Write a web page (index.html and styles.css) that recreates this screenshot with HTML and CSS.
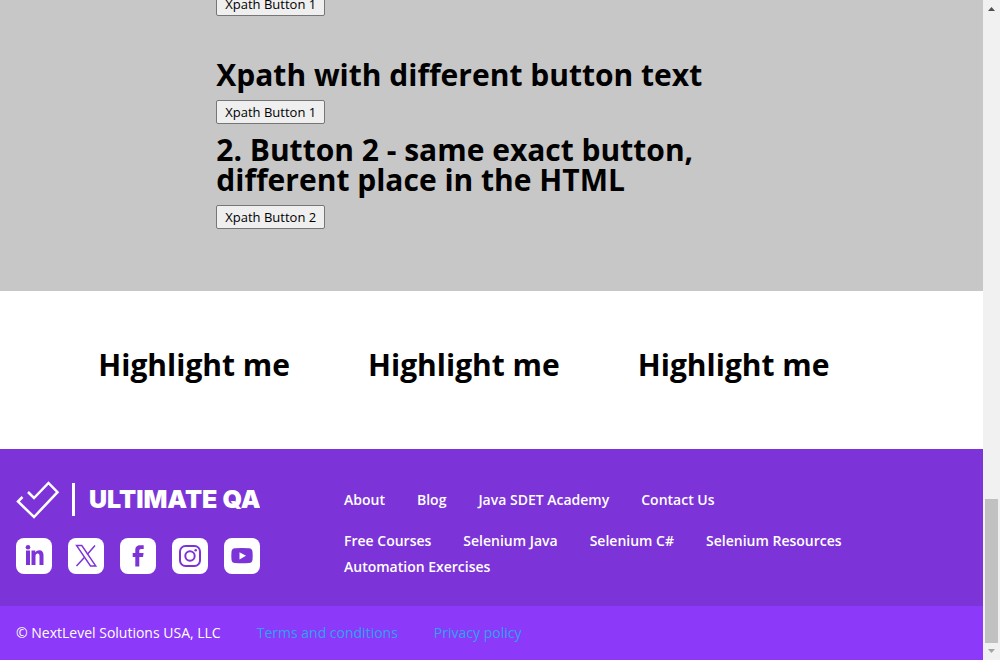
FILE: index.html
```html
<!DOCTYPE html>
<html lang="en">
<head>
<meta charset="utf-8">
<title>Ultimate QA</title>
<link rel="stylesheet" href="styles.css">
</head>
<body>
<div class="viewport">
  <div class="page">
    <main>
      <section class="xpaths">
        <div class="container">
          <div class="xpath-column">
            <button type="button" class="plain-button first-button">Xpath Button 1</button>
            <h2 class="heading">Xpath with different button text</h2>
            <button type="button" class="plain-button">Xpath Button 1</button>
            <h2 class="heading spaced">2. Button 2 - same exact button, different place in the HTML</h2>
            <button type="button" class="plain-button">Xpath Button 2</button>
          </div>
        </div>
      </section>
      <section class="highlights">
        <div class="container highlight-row">
          <h2 class="heading">Highlight me</h2>
          <h2 class="heading">Highlight me</h2>
          <h2 class="heading">Highlight me</h2>
        </div>
      </section>
    </main>
    <footer>
      <div class="footer-main">
        <div class="brand">
          <a class="logo" href="#" aria-label="Ultimate QA">
            <svg class="logo-mark" viewBox="0 0 60 38" width="60" height="38" aria-hidden="true">
              <path d="M6.500 16 2 20.500l16 15.500L41.500 11.200 32.500 2 18 17l-6-6" fill="none" stroke="#fff" stroke-width="2.500"/>
              <path d="M57.500 2v33" stroke="#fff" stroke-width="3"/>
            </svg>
            <svg class="logo-name" viewBox="0 0 172 38" width="172" height="38"><text x="1" y="27">ULTIMATE QA</text></svg>
          </a>
          <nav class="social" aria-label="Social media">
            <a href="#" aria-label="LinkedIn"><svg viewBox="0 0 36 36"><circle cx="12" cy="9.300" r="2.300"/><path d="M10 12.500h4v14.500h-4zM15.500 12.500h3.800v2c1-1.600 2.200-2.300 4-2.300 3 0 4.200 2 4.200 5.300v9.500h-4v-8.700c0-1.800-.5-2.800-1.800-2.800-1.500 0-2.200 1-2.200 2.900V27h-4z"/></svg></a>
            <a href="#" aria-label="X"><svg viewBox="0 0 36 36"><path d="M8.500 7.500h5.300l14 20.500h-5.300z" fill="none" stroke="#7c33d8" stroke-width="1.400"/><path d="M27 7.500l-7.800 8.900M16.600 19.200 8.500 28" fill="none" stroke="#7c33d8" stroke-width="1.500"/></svg></a>
            <a href="#" aria-label="Facebook"><svg viewBox="0 0 36 36"><path d="M15.300 28.500V19h-2.600v-4h2.600v-2.700c0-3.600 1.700-5.100 5-5.100h3.400V11h-2.200c-1.700 0-2.200.7-2.200 1.900V15h4.300l-.6 4h-3.700v9.500z"/></svg></a>
            <a href="#" aria-label="Instagram"><svg viewBox="0 0 36 36"><rect x="8" y="8" width="20" height="20" rx="5.500" fill="none" stroke="#7c33d8" stroke-width="2"/><circle cx="18" cy="18" r="4.700" fill="none" stroke="#7c33d8" stroke-width="2"/><circle cx="23.700" cy="12.300" r="1.300"/></svg></a>
            <a href="#" aria-label="YouTube"><svg viewBox="0 0 36 36"><path d="M11 10.300q7-.6 14 0 3.200.2 3.500 3.500.4 4 0 8-.3 3.100-3.500 3.300-7 .5-14 0-3.200-.2-3.500-3.300-.4-4 0-8 .3-3.300 3.500-3.500z"/><path class="cutout" d="M15.500 14.200v7.200l6.500-3.600z"/></svg></a>
          </nav>
        </div>
        <nav class="footer-links" aria-label="Footer">
          <div class="link-row">
            <a href="#">About</a><a href="#">Blog</a><a href="#">Java SDET Academy</a><a href="#">Contact Us</a>
          </div>
          <div class="link-row">
            <a href="#">Free Courses</a><a href="#">Selenium Java</a><a href="#">Selenium C#</a><a href="#">Selenium Resources</a><a href="#">Automation Exercises</a>
          </div>
        </nav>
      </div>
      <div class="footer-legal">
        <span>© NextLevel Solutions USA, LLC</span>
        <a href="#">Terms and conditions</a>
        <a href="#">Privacy policy</a>
      </div>
    </footer>
  </div>
  <div class="scrollbar" aria-hidden="true">
    <svg viewBox="0 0 17 17" width="17" height="17"><path d="M5 11h7L8.500 7z" fill="#505050"/></svg>
    <div class="track"><div class="thumb"></div></div>
    <svg viewBox="0 0 17 17" width="17" height="17"><path d="M5 6h7l-3.500 4z" fill="#a3a3a3"/></svg>
  </div>
</div>
</body>
</html>
```
FILE: styles.css
```css
* {
  box-sizing: border-box;
}

body {
  margin: 0;
  font-family: "Open Sans", "Noto Sans", sans-serif;
  font-size: 14px;
  background: #fff;
}

a {
  color: inherit;
  text-decoration: none;
}

.viewport {
  display: flex;
  height: 100vh;
  overflow: hidden;
}

.page {
  flex: 1;
  min-width: 0;
  display: flex;
  flex-direction: column;
  justify-content: flex-end;
}

.container {
  width: 80%;
  margin: 0 auto;
}

.heading {
  margin: 0;
  font-size: 30px;
  line-height: 30px;
  font-weight: 700;
  color: #000;
}

.xpaths {
  background: #c7c7c7;
  padding-bottom: 62px;
}

.xpath-column {
  display: flex;
  flex-direction: column;
  align-items: flex-start;
  width: 80%;
  padding-left: 15%;
}

.plain-button {
  height: 24px;
  margin-top: 10px;
  padding: 0 8px;
  border: 1px solid #767676;
  border-radius: 2px;
  background: #efefef;
  color: #000;
  font-family: inherit;
  font-size: 13px;
}

.plain-button.first-button {
  margin: 0 0 44px;
}

.heading.spaced {
  margin-top: 11px;
}

.highlights {
  padding: 59px 0 69px;
}

.highlight-row {
  display: flex;
  gap: 78px;
}

.footer-main {
  display: flex;
  gap: 84px;
  padding: 32px 16px;
  padding-bottom: 26px;
  background: #7c33d8;
  color: #fff;
}

.brand {
  display: flex;
  flex-direction: column;
  gap: 19px;
}

.logo {
  display: flex;
  gap: 12px;
}

.logo-name text {
  font-family: Inter, sans-serif;
  font-weight: 900;
  font-size: 25px;
  fill: #fff;
}

.social {
  display: flex;
  gap: 16px;
}

.social a {
  width: 36px;
  height: 36px;
  border-radius: 8px;
  background: #fff;
}

.social svg {
  display: block;
  fill: #7c33d8;
}

.social .cutout {
  fill: #fff;
}

.footer-links {
  flex: 1;
  display: flex;
  flex-direction: column;
  gap: 15px;
  padding-top: 6px;
  font-weight: 600;
  line-height: 26px;
}

.link-row {
  display: flex;
  flex-wrap: wrap;
  column-gap: 32px;
}

.footer-legal {
  display: flex;
  gap: 36px;
  padding: 14px 16px;
  background: #8c39fa;
  color: #fff;
  line-height: 26px;
}

.footer-legal a {
  color: #2ea3f2;
}

.scrollbar {
  display: flex;
  flex-direction: column;
  width: 17px;
  background: #f1f1f1;
}

.track {
  flex: 1;
  display: flex;
  flex-direction: column;
  justify-content: flex-end;
  padding: 0 2px;
}

.thumb {
  height: 23%;
  background: #c1c1c1;
}
```
